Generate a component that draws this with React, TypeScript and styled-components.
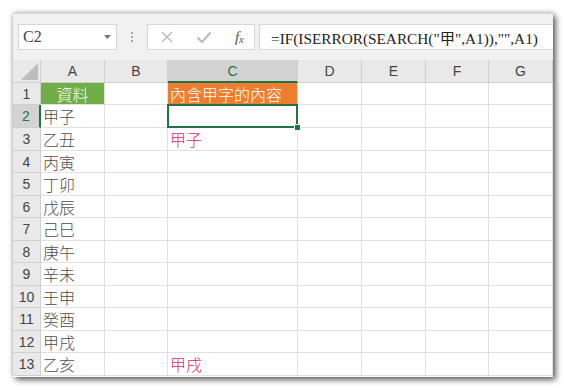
import styled, { createGlobalStyle } from "styled-components";

const GlobalStyle = createGlobalStyle`
  html, body {
    margin: 0;
    padding: 0;
    background: #ffffff;
  }
  body {
    font-family: "Liberation Sans", "Noto Sans CJK TC", sans-serif;
  }
`;

const CJK = `"Noto Sans CJK TC", "Noto Sans CJK SC", sans-serif`;

const colWidths = [28, 64, 63, 130, 64, 64, 63, 64];
const rowHeights = [22, 23, 23, 22, 23, 22, 23, 22, 23, 22, 23, 22, 23];
const letters = ["A", "B", "C", "D", "E", "F", "G"];

const dataA = [
  "甲子",
  "乙丑",
  "丙寅",
  "丁卯",
  "戊辰",
  "己巳",
  "庚午",
  "辛未",
  "壬申",
  "癸酉",
  "甲戌",
  "乙亥",
];

const resultC: Record<number, string> = {
  3: "甲子",
  13: "甲戌",
};

const App = () => {
  return (
    <>
      <GlobalStyle />
      <Page>
        <Window>
          <FormulaBar>
            <NameBox>
              <span>C2</span>
              <Caret>
                <svg width="7" height="4" viewBox="0 0 7 4">
                  <path d="M0 0 L7 0 L3.5 4 Z" fill="#777" />
                </svg>
              </Caret>
            </NameBox>
            <Grip>
              <i />
              <i />
              <i />
            </Grip>
            <FxBox>
              <svg width="14" height="14" viewBox="0 0 14 14">
                <path
                  d="M2 2 L12 12 M12 2 L2 12"
                  stroke="#b9b9b9"
                  strokeWidth="1.4"
                  fill="none"
                />
              </svg>
              <svg width="16" height="14" viewBox="0 0 16 14">
                <path
                  d="M1.5 7.5 L6 12 L14.5 2.5"
                  stroke="#b9b9b9"
                  strokeWidth="2"
                  fill="none"
                />
              </svg>
              <Fx>
                f<sub>x</sub>
              </Fx>
            </FxBox>
            <FormulaInput>=IF(ISERROR(SEARCH("甲",A1)),"",A1)</FormulaInput>
          </FormulaBar>
          <Sheet>
            <Corner>
              <svg width="17" height="17" viewBox="0 0 17 17">
                <path d="M17 0 L17 17 L0 17 Z" fill="#bdbdbd" />
              </svg>
            </Corner>
            {letters.map((l) => (
              <ColHead key={l} $active={l === "C"}>
                {l}
              </ColHead>
            ))}
            {rowHeights.map((h, i) => {
              const row = i + 1;
              return [
                <RowHead key={`r${row}`} $h={h} $active={row === 2}>
                  {row}
                </RowHead>,
                ...letters.map((l) => {
                  let text = "";
                  let fill = "";
                  let color = "#4d4d4d";
                  let center = false;
                  if (l === "A") {
                    if (row === 1) {
                      text = "資料";
                      fill = "#70ad47";
                      color = "#ffffff";
                      center = true;
                    } else {
                      text = dataA[row - 2];
                    }
                  }
                  if (l === "C") {
                    if (row === 1) {
                      text = "內含甲字的內容";
                      fill = "#ed7d31";
                      color = "#ffffff";
                    } else if (resultC[row]) {
                      text = resultC[row];
                      color = "#db2d5e";
                    }
                  }
                  return (
                    <Cell
                      key={`${l}${row}`}
                      $h={h}
                      $fill={fill}
                      $color={color}
                      $center={center}
                      $selected={l === "C" && row === 2}
                    >
                      {text}
                    </Cell>
                  );
                }),
              ];
            })}
          </Sheet>
        </Window>
      </Page>
    </>
  );
};

export default App;

const Page = styled.div`
  width: 567px;
  height: 391px;
  padding: 13px 0 0 13px;
  box-sizing: border-box;
`;

const Window = styled.div`
  width: 540px;
  height: 364px;
  background: #f1f1f1;
  box-shadow: 0 0 5px rgba(0, 0, 0, 0.3), 3px 3px 6px rgba(0, 0, 0, 0.55);
  display: flex;
  flex-direction: column;
  overflow: hidden;
`;

const FormulaBar = styled.div`
  height: 47px;
  display: flex;
  align-items: center;
  padding: 0 0 0 5px;
  box-sizing: border-box;
  border-top: 1px solid #dadada;
`;

const NameBox = styled.div`
  width: 99px;
  height: 26px;
  background: #ffffff;
  border: 1px solid #d6d6d6;
  box-sizing: border-box;
  display: flex;
  align-items: center;
  justify-content: space-between;
  padding: 0 5px 0 4px;
  font-family: "Liberation Serif", serif;
  font-size: 16px;
  color: #444;
`;

const Caret = styled.span`
  display: flex;
  align-items: center;
`;

const Grip = styled.div`
  width: 30px;
  height: 26px;
  display: flex;
  flex-direction: column;
  align-items: center;
  justify-content: center;
  gap: 2px;
  i {
    display: block;
    width: 2px;
    height: 2px;
    background: #a8a8a8;
  }
`;

const FxBox = styled.div`
  width: 108px;
  height: 26px;
  background: #ffffff;
  border: 1px solid #d6d6d6;
  box-sizing: border-box;
  display: flex;
  align-items: center;
  justify-content: space-between;
  padding: 0 10px 0 12px;
`;

const Fx = styled.span`
  font-family: "Liberation Serif", serif;
  font-style: italic;
  font-size: 15px;
  color: #555;
  sub {
    font-size: 11px;
    vertical-align: -1px;
  }
`;

const FormulaInput = styled.div`
  flex: 1;
  height: 26px;
  margin-left: 4px;
  background: #ffffff;
  border: 1px solid #d6d6d6;
  border-right: none;
  box-sizing: border-box;
  display: flex;
  align-items: center;
  padding-left: 11px;
  font-family: "Liberation Serif", "Noto Sans CJK TC", serif;
  font-size: 15.3px;
  color: #222;
  white-space: nowrap;
`;

const Sheet = styled.div`
  flex: 1;
  background: #ffffff;
  display: grid;
  grid-template-columns: ${colWidths.map((w) => `${w}px`).join(" ")};
  grid-auto-rows: min-content;
  align-content: start;
`;

const Corner = styled.div`
  height: 23px;
  background: #e9e9e9;
  border-right: 1px solid #cfcfcf;
  border-bottom: 1px solid #cfcfcf;
  box-sizing: border-box;
  display: flex;
  align-items: flex-end;
  justify-content: flex-end;
  padding: 0 2px 2px 0;
`;

const ColHead = styled.div<{ $active?: boolean }>`
  height: 23px;
  background: ${(p) => (p.$active ? "#d3d3d3" : "#e9e9e9")};
  color: ${(p) => (p.$active ? "#217346" : "#444")};
  border-right: 1px solid #cfcfcf;
  border-bottom: ${(p) => (p.$active ? "2px solid #217346" : "1px solid #cfcfcf")};
  box-sizing: border-box;
  display: flex;
  align-items: center;
  justify-content: center;
  font-size: 14px;
`;

const RowHead = styled.div<{ $h: number; $active?: boolean }>`
  height: ${(p) => p.$h}px;
  background: ${(p) => (p.$active ? "#d3d3d3" : "#e9e9e9")};
  color: ${(p) => (p.$active ? "#217346" : "#444")};
  border-right: ${(p) => (p.$active ? "2px solid #217346" : "1px solid #cfcfcf")};
  border-bottom: 1px solid #cfcfcf;
  box-sizing: border-box;
  display: flex;
  align-items: center;
  justify-content: center;
  font-size: 14px;
`;

const Cell = styled.div<{
  $h: number;
  $fill: string;
  $color: string;
  $center: boolean;
  $selected: boolean;
}>`
  position: relative;
  height: ${(p) => p.$h}px;
  background: ${(p) => p.$fill || "#ffffff"};
  color: ${(p) => p.$color};
  border-right: 1px solid #e1e1e1;
  border-bottom: 1px solid #e1e1e1;
  box-sizing: border-box;
  display: flex;
  align-items: center;
  justify-content: ${(p) => (p.$center ? "center" : "flex-start")};
  padding-left: ${(p) => (p.$center ? 0 : 2)}px;
  font-family: ${CJK};
  font-size: 16px;
  font-weight: 300;
  white-space: nowrap;
  overflow: visible;
  ${(p) =>
    p.$selected &&
    `
    &::after {
      content: "";
      position: absolute;
      left: -1px;
      top: -1px;
      right: -1px;
      bottom: -1px;
      border: 2px solid #217346;
    }
    &::before {
      content: "";
      position: absolute;
      right: -4px;
      bottom: -4px;
      width: 5px;
      height: 5px;
      background: #217346;
      border: 1px solid #fff;
      z-index: 1;
    }
  `}
`;
